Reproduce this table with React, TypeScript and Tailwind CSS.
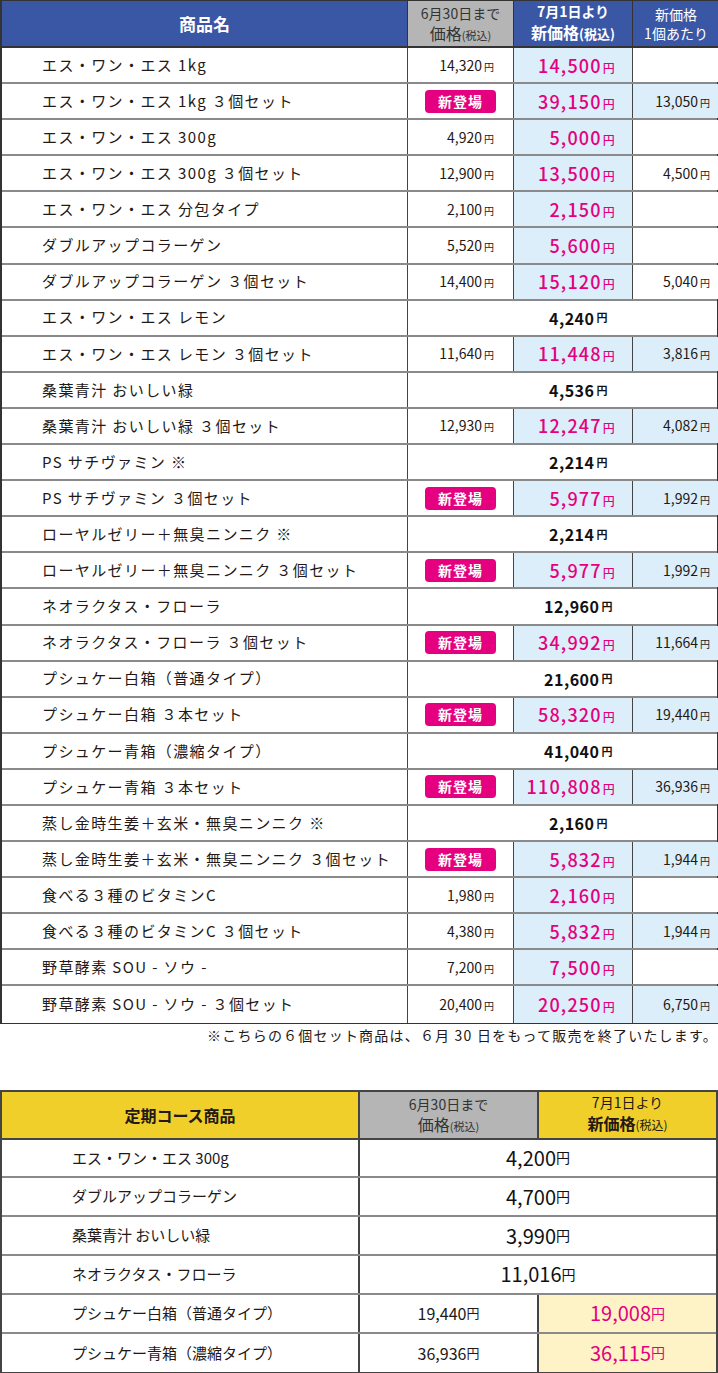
const JP = 'font-["Noto_Sans_CJK_JP","Noto_Sans",sans-serif]';

type Row = {
  name: string;
  old?: string;
  badge?: boolean;
  price?: string;
  unit?: string;
  unitBlue?: boolean;
  merged?: string;
};

const rows: Row[] = [
  { name: 'エス・ワン・エス 1kg', old: '14,320', price: '14,500' },
  { name: 'エス・ワン・エス 1kg ３個セット', badge: true, price: '39,150', unit: '13,050', unitBlue: true },
  { name: 'エス・ワン・エス 300g', old: '4,920', price: '5,000' },
  { name: 'エス・ワン・エス 300g ３個セット', old: '12,900', price: '13,500', unit: '4,500' },
  { name: 'エス・ワン・エス 分包タイプ', old: '2,100', price: '2,150' },
  { name: 'ダブルアップコラーゲン', old: '5,520', price: '5,600' },
  { name: 'ダブルアップコラーゲン ３個セット', old: '14,400', price: '15,120', unit: '5,040' },
  { name: 'エス・ワン・エス レモン', merged: '4,240' },
  { name: 'エス・ワン・エス レモン ３個セット', old: '11,640', price: '11,448', unit: '3,816', unitBlue: true },
  { name: '桑葉青汁 おいしい緑', merged: '4,536' },
  { name: '桑葉青汁 おいしい緑 ３個セット', old: '12,930', price: '12,247', unit: '4,082', unitBlue: true },
  { name: 'PS サチヴァミン ※', merged: '2,214' },
  { name: 'PS サチヴァミン ３個セット', badge: true, price: '5,977', unit: '1,992', unitBlue: true },
  { name: 'ローヤルゼリー＋無臭ニンニク ※', merged: '2,214' },
  { name: 'ローヤルゼリー＋無臭ニンニク ３個セット', badge: true, price: '5,977', unit: '1,992', unitBlue: true },
  { name: 'ネオラクタス・フローラ', merged: '12,960' },
  { name: 'ネオラクタス・フローラ ３個セット', badge: true, price: '34,992', unit: '11,664', unitBlue: true },
  { name: 'プシュケー白箱（普通タイプ）', merged: '21,600' },
  { name: 'プシュケー白箱 ３本セット', badge: true, price: '58,320', unit: '19,440', unitBlue: true },
  { name: 'プシュケー青箱（濃縮タイプ）', merged: '41,040' },
  { name: 'プシュケー青箱 ３本セット', badge: true, price: '110,808', unit: '36,936', unitBlue: true },
  { name: '蒸し金時生姜＋玄米・無臭ニンニク ※', merged: '2,160' },
  { name: '蒸し金時生姜＋玄米・無臭ニンニク ３個セット', badge: true, price: '5,832', unit: '1,944', unitBlue: true },
  { name: '食べる３種のビタミンC', old: '1,980', price: '2,160' },
  { name: '食べる３種のビタミンC ３個セット', old: '4,380', price: '5,832', unit: '1,944', unitBlue: true },
  { name: '野草酵素 SOU - ソウ -', old: '7,200', price: '7,500' },
  { name: '野草酵素 SOU - ソウ - ３個セット', old: '20,400', price: '20,250', unit: '6,750', unitBlue: true },
];

const teiki = [
  { name: 'エス・ワン・エス 300g', merged: '4,200' },
  { name: 'ダブルアップコラーゲン', merged: '4,700' },
  { name: '桑葉青汁 おいしい緑', merged: '3,990' },
  { name: 'ネオラクタス・フローラ', merged: '11,016' },
  { name: 'プシュケー白箱（普通タイプ）', old: '19,440', price: '19,008' },
  { name: 'プシュケー青箱（濃縮タイプ）', old: '36,936', price: '36,115' },
];

function Yen({ className = '' }: { className?: string }) {
  return <span className={className}>円</span>;
}

function PriceRow({ row }: { row: Row }) {
  return (
    <div className="grid grid-cols-[406px_106px_119px_86px] h-[36.1px] border-b-2 border-[#8a8a8a] last:border-b-0">
      <div className="flex items-center pl-[40px] text-[15px] tracking-[1.4px] text-[#231815] border-r border-[#444]">
        {row.name}
      </div>
      {row.merged ? (
        <div className="col-span-3 flex items-center justify-center pl-[30px] text-[16px] font-bold tracking-[0.5px] text-[#111]">
          {row.merged}
          <Yen className="text-[11px] ml-[2px] font-bold" />
        </div>
      ) : (
        <>
          <div className="flex items-center justify-end pr-[19px] border-r border-[#444]">
            {row.badge ? (
              <span className="mr-[-2px] w-[71px] h-[23px] rounded-[4px] bg-[#e4007f] text-white text-[14px] font-bold flex items-center justify-center tracking-[1px]">
                新登場
              </span>
            ) : (
              <span className="text-[14px] text-[#231815]">
                {row.old}
                <Yen className="text-[10px] ml-[2px]" />
              </span>
            )}
          </div>
          <div className="flex items-center justify-end pr-[16px] bg-[#dceefa] border-r border-[#444]">
            <span className="text-[18px] font-medium tracking-[1.2px] text-[#e4007f]">
              {row.price}
              <Yen className="text-[12px] ml-[1px]" />
            </span>
          </div>
          <div className={`flex items-center justify-end pr-[9px] ${row.unitBlue ? 'bg-[#dceefa]' : 'bg-white'}`}>
            {row.unit && (
              <span className="text-[14px] text-[#231815]">
                {row.unit}
                <Yen className="text-[10px] ml-[2px]" />
              </span>
            )}
          </div>
        </>
      )}
    </div>
  );
}

export default function App() {
  return (
    <div className={`w-[718px] bg-white ${JP}`}>
      {/* Main price table */}
      <div className="border border-[#333] border-l-2">
        <div className="grid grid-cols-[406px_106px_119px_86px] h-[47px] border-b-2 border-[#333]">
          <div className="bg-[#3a57a6] flex items-center justify-center text-white text-[17px] font-bold border-r border-[#333]">
            商品名
          </div>
          <div className="bg-[#b5b5b5] flex flex-col items-center justify-center text-[#333] text-[14px] leading-[20px] border-r border-[#333]">
            <span>6月30日まで</span>
            <span className="text-[16px]">
              価格<span className="text-[11px]">(税込)</span>
            </span>
          </div>
          <div className="bg-[#3a57a6] flex flex-col items-center justify-center text-white font-bold border-r border-[#333]">
            <span className="text-[14px] leading-[19px]">7月1日より</span>
            <span className="text-[16px] leading-[22px]">
              新価格<span className="text-[13px]">(税込)</span>
            </span>
          </div>
          <div className="bg-[#3a57a6] flex flex-col items-center justify-center text-white text-[14px] leading-[19px]">
            <span>新価格</span>
            <span>1個あたり</span>
          </div>
        </div>
        {rows.map((r, i) => (
          <PriceRow key={i} row={r} />
        ))}
      </div>

      <p className="text-right text-[14px] tracking-[1.2px] text-[#231815] mt-[1px] leading-[20px]">
        ※こちらの６個セット商品は、６月 30 日をもって販売を終了いたします。
      </p>

      {/* Subscription table */}
      <div className="mt-[45px] border-2 border-[#444]">
        <div className="grid grid-cols-[358px_179px_177px] h-[48px] border-b-2 border-[#444]">
          <div className="bg-[#f0cf2b] flex items-center justify-center text-[16px] font-bold text-[#231815] border-r-2 border-[#444]">
            定期コース商品
          </div>
          <div className="bg-[#b5b5b5] flex flex-col items-center justify-center text-[#333] text-[14px] leading-[20px] border-r-2 border-[#444]">
            <span>6月30日まで</span>
            <span className="text-[16px]">
              価格<span className="text-[11px]">(税込)</span>
            </span>
          </div>
          <div className="bg-[#f0cf2b] flex flex-col items-center justify-center text-[#231815]">
            <span className="text-[14px] leading-[19px]">7月1日より</span>
            <span className="text-[16px] leading-[22px] font-bold">
              新価格<span className="text-[12px] font-normal">(税込)</span>
            </span>
          </div>
        </div>
        {teiki.map((r, i) => (
          <div
            key={i}
            className="grid grid-cols-[358px_179px_177px] h-[38.8px] border-b-2 border-[#8a8a8a] last:border-b-0"
          >
            <div className="flex items-center pl-[70px] text-[15px] text-[#231815] border-r-2 border-[#444]">
              {r.name}
            </div>
            {r.merged ? (
              <div className="col-span-2 flex items-center justify-center text-[20px] text-[#111]">
                {r.merged}
                <Yen className="text-[14px]" />
              </div>
            ) : (
              <>
                <div className="flex items-center justify-center text-[16px] text-[#231815] border-r-2 border-[#444]">
                  {r.old}
                  <Yen className="text-[13px]" />
                </div>
                <div className="flex items-center justify-center bg-[#fdf3c6] text-[20px] text-[#e4007f]">
                  {r.price}
                  <Yen className="text-[14px]" />
                </div>
              </>
            )}
          </div>
        ))}
      </div>
    </div>
  );
}
